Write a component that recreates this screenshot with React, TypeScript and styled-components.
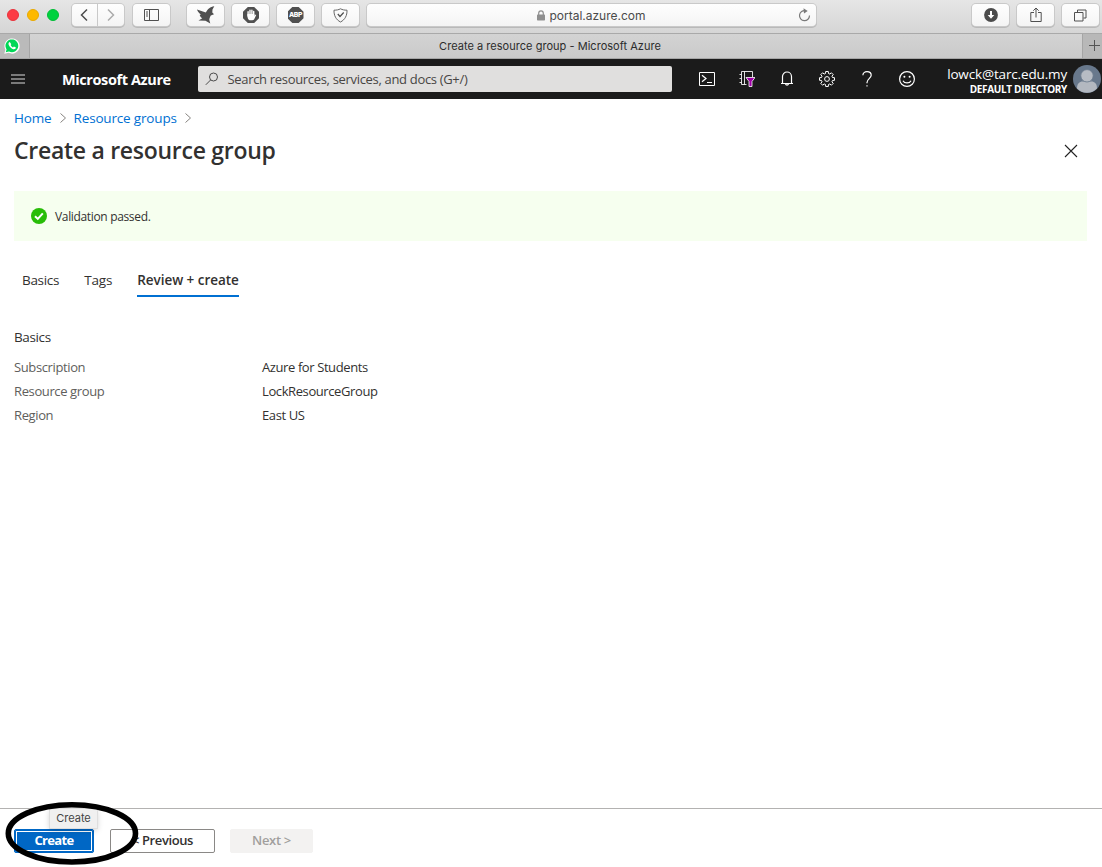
import React from "react";
import styled, { createGlobalStyle } from "styled-components";

const GlobalStyle = createGlobalStyle`
  * { box-sizing: border-box; }
  body { margin: 0; background: #fff; }
  svg { display: block; flex: none; }
`;

const segoe = `"Open Sans", "Noto Sans", sans-serif`;
const system = `Inter, "Liberation Sans", sans-serif`;

const Page = styled.div`
  width: 1102px;
  height: 867px;
  display: flex;
  flex-direction: column;
  overflow: hidden;
  font-family: ${segoe};
  color: #323130;
`;

const Label = styled.span<{ $size: number; $track?: number; $weight?: number; $color?: string }>`
  font-size: ${(p) => p.$size}px;
  letter-spacing: ${(p) => p.$track ?? 0}px;
  font-weight: ${(p) => p.$weight ?? 400};
  color: ${(p) => p.$color ?? "inherit"};
  line-height: 1.3;
  white-space: nowrap;
`;

/* Browser chrome */
const Toolbar = styled.div`
  height: 34px;
  flex: none;
  display: flex;
  align-items: flex-start;
  padding: 4px 0 0 7px;
  background: linear-gradient(#e6e6e6, #d5d5d5);
  border-bottom: 1px solid #a9a9a9;
`;
const Lights = styled.div`
  display: flex;
  gap: 8px;
  padding-top: 5px;
  width: 65px;
`;
const Light = styled.i<{ $fill: string; $edge: string }>`
  width: 12px;
  height: 12px;
  border-radius: 50%;
  background: ${(p) => p.$fill};
  border: 1px solid ${(p) => p.$edge};
`;
const ToolButton = styled.div<{ $gap?: number; $width?: number }>`
  width: ${(p) => p.$width ?? 37}px;
  height: 22px;
  flex: none;
  margin-left: ${(p) => p.$gap ?? 8}px;
  border-radius: 4px;
  background: linear-gradient(#fefefe, #f4f4f4);
  box-shadow: 0 0 0 1px #c9c9c9, 0 1px 0 1px #b9b9b9;
  display: flex;
  align-items: center;
  justify-content: center;
  color: #4d4d4d;
`;
const NavHalf = styled.div<{ $divided?: boolean }>`
  width: ${(p) => (p.$divided ? 27 : 25)}px;
  height: 22px;
  display: flex;
  align-items: center;
  justify-content: center;
  border-left: ${(p) => (p.$divided ? "1px solid #c9c9c9" : "0")};
`;
const AddressBar = styled(ToolButton)`
  width: 449px;
  padding-right: 5px;
  font-family: ${system};
`;
const Address = styled.div`
  flex: 1;
  display: flex;
  align-items: center;
  justify-content: center;
  gap: 4px;
  padding: 1px 0 0 18px;
`;
const TabStrip = styled.div`
  height: 25px;
  flex: none;
  display: flex;
  background: linear-gradient(#d3d3d3, #cacaca);
  border-bottom: 1px solid #a6a6a6;
  font-family: ${system};
`;
const PinnedTab = styled.div`
  width: 30px;
  padding: 4px 0 0 4px;
  background: #bababa;
  border-right: 1px solid #a5a5a5;
`;
const ActiveTab = styled.div`
  flex: 1;
  display: flex;
  align-items: center;
  justify-content: center;
  padding: 1px 12px 0 0;
`;
const NewTab = styled.div`
  width: 20px;
  padding: 6px 0 0 6px;
  background: #b8b8b8;
  border-left: 1px solid #a5a5a5;
`;

/* Portal header */
const Header = styled.header`
  height: 40px;
  flex: none;
  display: flex;
  align-items: center;
  background: #1b1b1b;
  color: #fff;
`;
const Menu = styled.div`
  width: 51px;
  padding-left: 11px;
`;
const Brand = styled.div`
  width: 136px;
  padding-left: 1px;
  margin-left: 10px;
`;
const Search = styled.div`
  width: 474px;
  height: 26px;
  margin-left: 1px;
  padding: 0 0 0 7px;
  display: flex;
  align-items: center;
  gap: 8.5px;
  border-radius: 2px;
  background: #e0dfde;
`;
const HeaderIcons = styled.div`
  display: flex;
  gap: 20px;
  margin-left: 25px;
`;
const Account = styled.div`
  flex: 1;
  display: flex;
  flex-direction: column;
  align-items: flex-end;
  margin-right: 6px;
  padding-top: 4px;
  gap: 0;
`;
const Avatar = styled.div`
  width: 29px;
`;

/* Content */
const Main = styled.main`
  flex: 1;
  padding: 0 15px 0 14px;
`;
const Crumbs = styled.nav`
  height: 38px;
  display: flex;
  align-items: center;
  gap: 8px;
`;
const CrumbLink = styled.a`
  display: flex;
  padding-top: 2px;
  color: #0070d2;
`;
const TitleRow = styled.div`
  height: 28px;
  display: flex;
  align-items: center;
  justify-content: space-between;
  padding-right: 9px;
`;
const Banner = styled.div`
  height: 50px;
  margin-top: 26px;
  padding-left: 17px;
  display: flex;
  align-items: center;
  gap: 8px;
  background: #f6ffef;
`;
const BannerText = styled.div`
  display: flex;
  padding-top: 2px;
`;
const Tabs = styled.div`
  display: flex;
  gap: 25px;
  margin-top: 23px;
  padding-left: 8px;
`;
const Tab = styled.div<{ $active?: boolean }>`
  height: 33px;
  display: flex;
  align-items: center;
  padding-top: 2px;
  padding-bottom: ${(p) => (p.$active ? 0 : 2)}px;
  border-bottom: ${(p) => (p.$active ? "2px solid #0070d2" : "0")};
`;
const Section = styled.section`
  margin-top: 28px;
`;
const SectionTitle = styled.div`
  height: 24px;
  display: flex;
  align-items: center;
  padding-top: 2px;
  margin-bottom: 6px;
`;
const Field = styled.div`
  height: 24px;
  display: grid;
  grid-template-columns: 248px 1fr;
  align-items: center;
`;

/* Footer */
const Footer = styled.footer`
  position: relative;
  height: 59px;
  flex: none;
  display: flex;
  padding: 20px 0 0 14px;
  border-top: 1px solid #b3b2b1;
`;
const Button = styled.button<{ $kind: "primary" | "plain" | "disabled"; $width: number; $gap?: number }>`
  width: ${(p) => p.$width}px;
  height: 24px;
  margin-left: ${(p) => p.$gap ?? 0}px;
  padding: 0 0 2px;
  display: flex;
  align-items: center;
  justify-content: center;
  font-family: ${segoe};
  border-radius: 2px;
  border: 1px solid ${(p) => ({ primary: "#0067c5", plain: "#8a8886", disabled: "#f3f2f1" })[p.$kind]};
  background: ${(p) => ({ primary: "#0067c5", plain: "#fff", disabled: "#f3f2f1" })[p.$kind]};
  color: ${(p) => ({ primary: "#fff", plain: "#323130", disabled: "#a19f9d" })[p.$kind]};
  box-shadow: ${(p) => (p.$kind === "primary" ? "inset 0 0 0 1px #0067c5, inset 0 0 0 2px #fff" : "none")};
`;
const Tooltip = styled.div`
  position: absolute;
  left: 50px;
  top: 0;
  width: 47px;
  height: 19px;
  display: flex;
  align-items: center;
  justify-content: center;
  background: #f0f0f0;
  box-shadow: 0 0 0 1px #dedede, 0 2px 6px rgba(0, 0, 0, 0.22);
  font-family: ${system};
`;
const Marker = styled.svg`
  position: absolute;
  left: 0;
  top: -9px;
`;

const Chevron = ({ left, color }: { left?: boolean; color: string }) => (
  <svg width="9" height="14" viewBox="0 0 9 14" fill="none" stroke={color} strokeWidth="1.5">
    <path d={left ? "M7 1.5 1.5 7 7 12.5" : "M1 1.5 6.5 7 1 12.5"} />
  </svg>
);

const CrumbArrow = () => (
  <svg width="6" height="10" viewBox="0 0 6 10" fill="none" stroke="#85827f" strokeWidth="1">
    <path d="M.5.5 5.5 5 .5 9.5" />
  </svg>
);

const SidebarIcon = () => (
  <svg width="15" height="12" viewBox="0 0 15 12" fill="none" stroke="#505050">
    <path d="M.5.5h14v11H.5zM5.5.5v11M2 3h2M2 5h2M2 7h2" />
  </svg>
);

const BirdIcon = () => (
  <svg width="20" height="18" viewBox="0 0 20 18" fill="#4f4f4f">
    <path d="M1 3.5 9.8 6.5C12 2.5 14 1 18.3.2L16.5 3.5 16.3 6.5 18 8.3 14.8 9.5C13.8 11.5 13.3 12.5 13.3 14L14.3 17.5 9.5 14.7 2.5 14.5 6.3 12.3C4.5 11.2 3.8 10 3.8 8.8L5 8.5C3 7.2 1.7 5.5 1 3.5Z" />
  </svg>
);

const HandIcon = () => (
  <svg width="16" height="16" viewBox="0 0 16 16">
    <path d="M4.8 0h6.4L16 4.8v6.4L11.2 16H4.8L0 11.2V4.8Z" fill="#505050" />
    <path d="M5.1 9V4.7M7 8V3.2M8.9 8V3.2M10.7 9V4.5" stroke="#fff" strokeWidth="1.4" strokeLinecap="round" />
    <path d="M4.4 7h7v2l1.1-1.5.7.6-2 4.2c-.6 1.2-4.5 1.4-5.7.1-1-1.1-1.1-3-1.1-5.400Z" fill="#fff" />
  </svg>
);

const BlockOctagon = styled.div`
  width: 16px;
  height: 16px;
  display: flex;
  align-items: center;
  justify-content: center;
  background: #505050;
  clip-path: polygon(30% 0, 70% 0, 100% 30%, 100% 70%, 70% 100%, 30% 100%, 0 70%, 0 30%);
  font-family: ${system};
`;

const ShieldIcon = () => (
  <svg width="15" height="15" viewBox="0 0 15 15" fill="none" stroke="#666">
    <path d="M7.5.8C9.3 1.8 11.5 2.2 14 2.2 14.2 7.5 12 11.7 7.5 14 3 11.7.8 7.5 1 2.2 3.5 2.2 5.7 1.8 7.5.8Z" />
    <path d="m4.8 6 2.2 2.5 3.7-4" stroke="#4d4d4d" strokeWidth="1.2" />
  </svg>
);

const LockIcon = () => (
  <svg width="8" height="11" viewBox="0 0 8 11">
    <path d="M1.7 5V3.2a2.3 2.3 0 0 1 4.6 0V5" fill="none" stroke="#8f8f8f" strokeWidth="1.2" />
    <rect y="4.5" width="8" height="6" rx=".7" fill="#8f8f8f" />
  </svg>
);

const ReloadIcon = () => (
  <svg width="13" height="14" viewBox="0 0 13 14">
    <path d="M7.5 2.7A5 5 0 1 0 11.5 7.5" fill="none" stroke="#7a7a7a" strokeWidth="1.2" />
    <path d="M5.5.2 9.7 2.9 6 5.6Z" fill="#7a7a7a" />
  </svg>
);

const DownloadIcon = () => (
  <svg width="14" height="14" viewBox="0 0 14 14">
    <circle cx="7" cy="7" r="6.9" fill="#4b4b4b" />
    <path d="M6 3h2v4h2.3L7 10.7 3.7 7H6Z" fill="#fff" />
  </svg>
);

const ShareIcon = () => (
  <svg width="12" height="16" viewBox="0 0 12 16" fill="none" stroke="#505050">
    <path d="M4 5.5H.8v9h10.4v-9H8M6 10.5V1M3.3 3.7 6 1l2.7 2.7" />
  </svg>
);

const WindowsIcon = () => (
  <svg width="13" height="13" viewBox="0 0 13 13" fill="none" stroke="#505050">
    <path d="M.5 3.5h8.5v8.5H.5zM3.5 3.5V1h8.5v8H9.5" />
  </svg>
);

const WhatsAppIcon = () => (
  <svg width="16" height="16" viewBox="0 0 16 16">
    <path d="M.3 15.7 1.4 11.7A7.6 7.6 0 1 1 4.6 14.8Z" fill="#fff" />
    <path d="M1.7 14.3 2.6 11.4A6.4 6.4 0 1 1 5 13.5Z" fill="#00d757" />
    <path d="M5.8 3.9c-1.4.3-1.6 1.9-.9 3.3 1.1 2 2.6 3.4 4.5 4 1.4.3 2.4-.6 2.5-1.7L9.9 8.5l-.9 1C7.9 9 7.1 8.2 6.6 7.1l.7-.9Z" fill="#fff" />
  </svg>
);

const CloudShellIcon = () => (
  <svg width="16" height="14" viewBox="0 0 16 14" fill="none" stroke="#fff">
    <path d="M.5.5h15v13H.5z" />
    <path d="m3 3.2 4 3.3-4 3.3M8 10.5h5" strokeWidth="1.2" />
  </svg>
);

const DirectoryIcon = () => (
  <svg width="16" height="16" viewBox="0 0 16 16" fill="none" stroke="#fff">
    <path d="M7.5 13.5H2.5v-13h11V6M5.5.5v13M.5 3.5h2M.5 7.5h2M.5 11.5h2" strokeOpacity=".85" />
    <path d="M7 6.5h9L13 10.5V15.5H10V10.5Z" fill="#a000a8" strokeWidth=".8" />
  </svg>
);

const BellIcon = () => (
  <svg width="14" height="16" viewBox="0 0 14 16" fill="none" stroke="#fff" strokeWidth="1.2">
    <path d="M1 12.5h12M2.5 12.5V5.5a4.5 4.5 0 0 1 9 0v7M5.5 13a1.6 1.6 0 0 0 3 0" />
  </svg>
);

const gearPath = Array.from({ length: 8 }, (_, i) => {
  const point = (r: number, offset: number) => {
    const a = ((i * 45 + offset) * Math.PI) / 180;
    return `${(8 + r * Math.cos(a)).toFixed(2)} ${(8 + r * Math.sin(a)).toFixed(2)}`;
  };
  return `${i ? "L" : "M"}${point(5.7, -15)}L${point(7.6, -10)}L${point(7.6, 10)}L${point(5.7, 15)}`;
}).join("");

const GearIcon = () => (
  <svg width="16" height="16" viewBox="0 0 16 16" fill="none" stroke="#fff" strokeWidth="1">
    <path d={`${gearPath}Z`} />
    <circle cx="8" cy="8" r="2.4" />
  </svg>
);

const HelpIcon = () => (
  <svg width="10" height="16" viewBox="0 0 10 16" fill="none" stroke="#fff" strokeWidth="1.2">
    <path d="M.9 4.3C.9 2 2.7.7 5 .7s4.2 1.3 4.2 3.5c0 3-4.2 3.9-4.2 7.2v.8M5 14.2v1.4" />
  </svg>
);

const SmileIcon = () => (
  <svg width="16" height="16" viewBox="0 0 16 16" fill="none" stroke="#fff" strokeWidth="1.2">
    <circle cx="8" cy="8" r="7.4" />
    <path d="M4 9.7c1.5 3 6.5 3 8 0" />
    <circle cx="5.4" cy="5.8" r="1" fill="#fff" stroke="none" />
    <circle cx="10.6" cy="5.8" r="1" fill="#fff" stroke="none" />
  </svg>
);

const IconSlot = styled.div`
  width: 20px;
  height: 20px;
  display: flex;
  align-items: center;
  justify-content: center;
`;

const fields = [
  { name: "Subscription", value: "Azure for Students" },
  { name: "Resource group", value: "LockResourceGroup" },
  { name: "Region", value: "East US" },
];

export default function App() {
  return (
    <Page>
      <GlobalStyle />
      <Toolbar>
        <Lights>
          <Light $fill="#fc3c45" $edge="#e9333c" />
          <Light $fill="#fdb900" $edge="#e9a900" />
          <Light $fill="#00d23f" $edge="#00bd36" />
        </Lights>
        <ToolButton $gap={0} $width={52}>
          <NavHalf><Chevron left color="#4b4b4b" /></NavHalf>
          <NavHalf $divided><Chevron color="#ababab" /></NavHalf>
        </ToolButton>
        <ToolButton $gap={9}><SidebarIcon /></ToolButton>
        <ToolButton $gap={17}><BirdIcon /></ToolButton>
        <ToolButton><HandIcon /></ToolButton>
        <ToolButton>
          <BlockOctagon><Label $size={6.8} $weight={800} $color="#fff" $track={-0.4}>ABP</Label></BlockOctagon>
        </ToolButton>
        <ToolButton><ShieldIcon /></ToolButton>
        <AddressBar>
          <Address>
            <LockIcon />
            <Label $size={12} $color="#4a4a4a">portal.azure.com</Label>
          </Address>
          <ReloadIcon />
        </AddressBar>
        <ToolButton $gap={156}><DownloadIcon /></ToolButton>
        <ToolButton><ShareIcon /></ToolButton>
        <ToolButton><WindowsIcon /></ToolButton>
      </Toolbar>
      <TabStrip>
        <PinnedTab><WhatsAppIcon /></PinnedTab>
        <ActiveTab>
          <Label $size={11} $color="#2c2c2c" $track={0.03}>Create a resource group - Microsoft Azure</Label>
        </ActiveTab>
        <NewTab>
          <svg width="12" height="12" viewBox="0 0 12 12" stroke="#555"><path d="M5.5 0v11M0 5.5h11" /></svg>
        </NewTab>
      </TabStrip>

      <Header>
        <Menu>
          <svg width="14" height="10" viewBox="0 0 14 10" stroke="#9c9c9c" strokeWidth="1.4"><path d="M0 1h14M0 5h14M0 9h14" /></svg>
        </Menu>
        <Brand><Label $size={14.5} $weight={700} $track={-0.4}>Microsoft Azure</Label></Brand>
        <Search>
          <svg width="14" height="14" viewBox="0 0 14 14" fill="none" stroke="#4a4a4a"><circle cx="8.5" cy="5" r="4" /><path d="M5.7 7.9.8 12.8" /></svg>
          <Label $size={13} $color="#484644" $track={-0.32}>Search resources, services, and docs (G+/)</Label>
        </Search>
        <HeaderIcons>
          <IconSlot><CloudShellIcon /></IconSlot>
          <IconSlot><DirectoryIcon /></IconSlot>
          <IconSlot><BellIcon /></IconSlot>
          <IconSlot><GearIcon /></IconSlot>
          <IconSlot><HelpIcon /></IconSlot>
          <IconSlot><SmileIcon /></IconSlot>
        </HeaderIcons>
        <Account>
          <Label $size={13.5} $track={-0.15}>lowck@tarc.edu.my</Label>
          <Label $size={10} $weight={700} $track={-0.33}>DEFAULT DIRECTORY</Label>
        </Account>
        <Avatar>
          <svg width="28" height="28" viewBox="0 0 28 28">
            <circle cx="14" cy="14" r="14" fill="#68788c" />
            <path d="M4 23.5C4 18.5 6.5 16.5 9.5 16.5h9c3 0 5.5 2 5.5 7a14 14 0 0 1-20 0Z" fill="#b3b8c0" />
            <circle cx="14" cy="10.8" r="6.2" fill="#b7bcc4" stroke="#68788c" strokeWidth=".8" />
          </svg>
        </Avatar>
      </Header>

      <Main>
        <Crumbs>
          <CrumbLink><Label $size={13.5} $track={-0.15}>Home</Label></CrumbLink>
          <CrumbArrow />
          <CrumbLink><Label $size={13.5} $track={-0.17}>Resource groups</Label></CrumbLink>
          <CrumbArrow />
        </Crumbs>
        <TitleRow>
          <Label $size={23} $weight={600} $track={-0.28}>Create a resource group</Label>
          <svg width="14" height="14" viewBox="0 0 14 14" stroke="#222" strokeWidth="1.1"><path d="m1 1 12 12M13 1 1 13" /></svg>
        </TitleRow>
        <Banner>
          <svg width="16" height="16" viewBox="0 0 16 16" fill="none">
            <circle cx="8" cy="8" r="8" fill="#28bd08" />
            <path d="m4 8.2 2.8 2.7 5-5.6" stroke="#fff" strokeWidth="2" />
          </svg>
          <BannerText><Label $size={12} $track={-0.34}>Validation passed.</Label></BannerText>
        </Banner>
        <Tabs>
          <Tab><Label $size={13.5} $track={-0.3}>Basics</Label></Tab>
          <Tab><Label $size={13.5} $track={-0.15}>Tags</Label></Tab>
          <Tab $active><Label $size={13.5} $weight={600} $track={-0.05}>Review + create</Label></Tab>
        </Tabs>
        <Section>
          <SectionTitle><Label $size={13.5} $track={-0.38}>Basics</Label></SectionTitle>
          {fields.map((f) => (
            <Field key={f.name}>
              <Label $size={13} $color="#605e5c" $track={-0.38}>{f.name}</Label>
              <Label $size={13} $track={-0.4}>{f.value}</Label>
            </Field>
          ))}
        </Section>
      </Main>

      <Footer>
        <Button $kind="primary" $width={80}><Label $size={13} $weight={700} $track={-0.65}>Create</Label></Button>
        <Button $kind="plain" $width={105} $gap={16}><Label $size={13} $weight={600} $track={-0.4}>&lt; Previous</Label></Button>
        <Button $kind="disabled" $width={83} $gap={15}><Label $size={13} $weight={600} $track={-0.3}>Next &gt;</Label></Button>
        <Tooltip><Label $size={11} $color="#444">Create</Label></Tooltip>
        <Marker width="145" height="68" viewBox="0 0 145 68" fill="none">
          <ellipse cx="71.9" cy="33.4" rx="63.6" ry="28.6" stroke="#000" strokeWidth="5.6" />
        </Marker>
      </Footer>
    </Page>
  );
}
